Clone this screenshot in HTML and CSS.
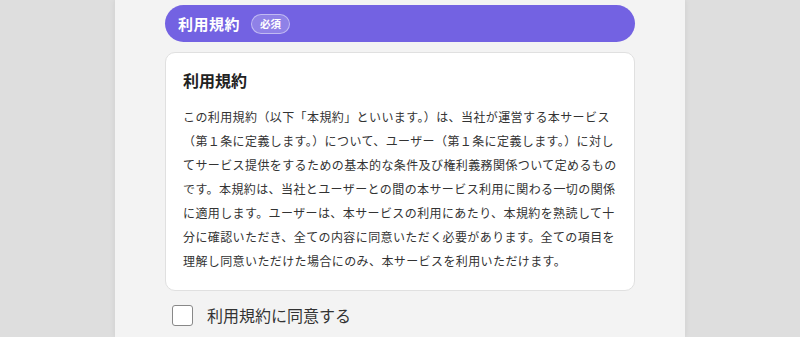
FILE: index.html
```html
<!DOCTYPE html>
<html lang="ja">
<head>
    <meta charset="UTF-8">
    <meta name="viewport" content="width=device-width, initial-scale=1.0">
    <title>利用規約</title>
    <link rel="stylesheet" href="styles.css">
</head>
<body>
    <div class="panel">
        <div class="section-head">
            <span class="section-title">利用規約</span>
            <span class="badge">必須</span>
        </div>
        <div class="terms-card">
            <h2 class="terms-title">利用規約</h2>
            <p class="terms-text">この利用規約（以下「本規約」といいます。）は、当社が運営する本サービス（第１条に定義します。）について、ユーザー（第１条に定義します。）に対してサービス提供をするための基本的な条件及び権利義務関係ついて定めるものです。本規約は、当社とユーザーとの間の本サービス利用に関わる一切の関係に適用します。ユーザーは、本サービスの利用にあたり、本規約を熟読して十分に確認いただき、全ての内容に同意いただく必要があります。全ての項目を理解し同意いただけた場合にのみ、本サービスを利用いただけます。</p>
        </div>
        <label class="agree">
            <input type="checkbox" class="agree-check">
            <span>利用規約に同意する</span>
        </label>
    </div>
</body>
</html>
```

FILE: styles.css
```css
body {
    font-family: "Noto Sans CJK JP", "Noto Sans", sans-serif;
    background-color: #dedede;
    color: #333;
    display: flex;
    justify-content: center;
    height: 100vh;
    margin: 0;
    overflow: hidden;
}
.panel {
    width: 470px;
    padding: 5px 50px 0;
    background-color: #f3f3f3;
    box-shadow: 0 0 6px rgba(0, 0, 0, 0.08);
}
.section-head {
    display: flex;
    align-items: center;
    gap: 11px;
    height: 37px;
    padding-left: 13px;
    background-color: #7362e2;
    border-radius: 19px;
    color: white;
}
.section-title {
    font-size: 15px;
    font-weight: bold;
    letter-spacing: 0.5px;
}
.badge {
    font-size: 10.5px;
    font-weight: bold;
    line-height: 18px;
    padding: 0 8px;
    border: 1px solid rgba(255, 255, 255, 0.45);
    background-color: rgba(255, 255, 255, 0.2);
    border-radius: 10px;
}
.terms-card {
    margin-top: 10px;
    padding: 17px 17px 17px;
    background-color: white;
    border: 1px solid #e0e0e0;
    border-radius: 10px;
}
.terms-title {
    margin: 0;
    font-size: 16px;
    line-height: 20px;
    font-weight: bold;
    color: #222;
}
.terms-text {
    margin: 15px 0 0;
    font-size: 12px;
    line-height: 24px;
    letter-spacing: 0.4px;
}
.agree {
    display: flex;
    align-items: center;
    gap: 14px;
    margin: 12px 0 0 7px;
    font-size: 16px;
    color: #333;
}
.agree-check {
    appearance: none;
    width: 21px;
    height: 21px;
    margin: 0;
    background-color: white;
    border: 1px solid #888;
    border-radius: 3px;
}
```
